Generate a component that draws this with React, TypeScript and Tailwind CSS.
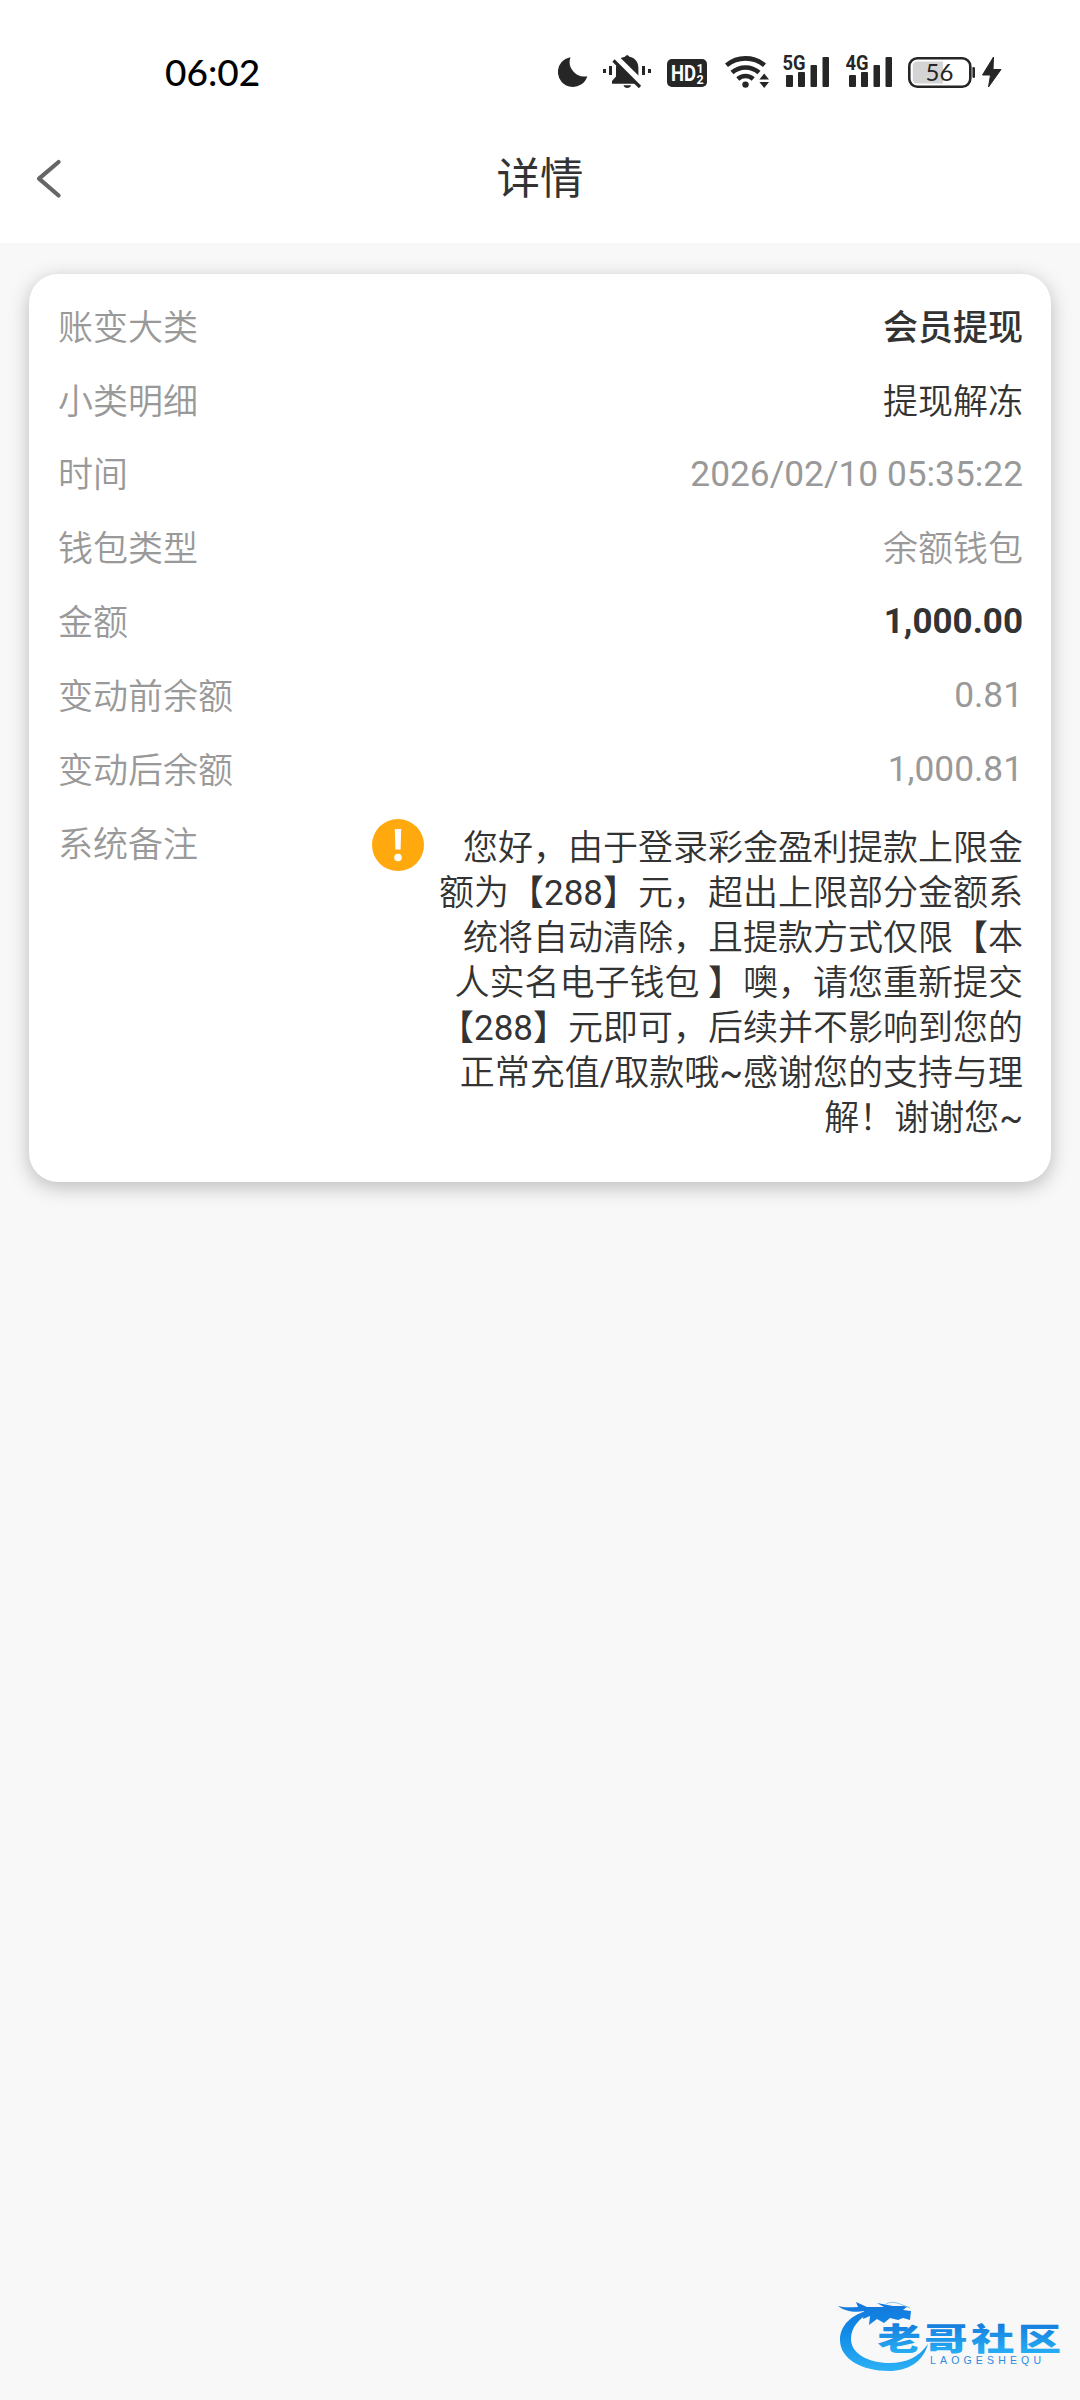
import type { ReactNode } from 'react';

type ValueTone = 'muted' | 'dark' | 'medium' | 'bold' | 'number';

interface DetailRowProps {
  label: string;
  value: string;
  tone?: ValueTone;
}

const toneClasses: Record<ValueTone, string> = {
  muted: 'pt-[3px] text-[#999] font-[350]',
  number: 'text-[35.3px] text-[#999] font-normal',
  dark: 'pt-[3px] text-[#333] font-[350]',
  medium: 'pt-[3px] text-[#333] font-medium',
  bold: '-mt-px text-[#333] font-bold',
};

const rows: DetailRowProps[] = [
  { label: '账变大类', value: '会员提现', tone: 'medium' },
  { label: '小类明细', value: '提现解冻', tone: 'dark' },
  { label: '时间', value: '2026/02/10 05:35:22', tone: 'number' },
  { label: '钱包类型', value: '余额钱包' },
  { label: '金额', value: '1,000.00', tone: 'bold' },
  { label: '变动前余额', value: '0.81', tone: 'number' },
  { label: '变动后余额', value: '1,000.81', tone: 'number' },
];

const remarkLines = [
  '您好，由于登录彩金盈利提款上限金',
  '额为【288】元，超出上限部分金额系',
  '统将自动清除，且提款方式仅限【本',
  '人实名电子钱包 】噢，请您重新提交',
  '【288】元即可，后续并不影响到您的',
  '正常充值/取款哦~感谢您的支持与理',
  '解！谢谢您~',
];

function SignalIcon({ label }: { label: string }) {
  return (
    <svg width="47" height="40" viewBox="0 0 47 40" fill="#262626">
      <text
        x="-0.5"
        y="19.5"
        fontFamily="Roboto, sans-serif"
        fontWeight="700"
        fontSize="20"
        textLength="23"
        lengthAdjust="spacingAndGlyphs"
      >
        {label}
      </text>
      <rect x="3" y="25" width="7" height="12" rx="1" />
      <rect x="15" y="22" width="7" height="15" rx="1" />
      <rect x="27.5" y="15" width="6.5" height="22" rx="1" />
      <rect x="39.5" y="7" width="6.5" height="30" rx="1" />
    </svg>
  );
}

function StatusBar() {
  return (
    <div className="flex h-[140px] items-start justify-between pt-[50px] pr-[78px] pl-[165px]">
      <span className="-mt-px font-[Lato,sans-serif] text-[37px] leading-[46px] font-medium text-black">06:02</span>
      <div className="flex">
        {/* Do not disturb */}
        <svg className="mr-[15px]" width="30" height="40" viewBox="558 50 30 40" fill="#262626">
          <path d="M570.5 57.2A15 15 0 1 0 587.3 76.2A14.6 14.6 0 0 1 570.5 57.2Z" />
        </svg>
        {/* Vibrate, ringer off */}
        <svg className="mr-[16px]" width="48" height="40" viewBox="603 50 48 40" fill="#262626">
          <rect x="603" y="69" width="3" height="4" />
          <rect x="609" y="66" width="3" height="9" />
          <rect x="642" y="66" width="3" height="9" />
          <rect x="648" y="69" width="3" height="4" />
          <path d="M612 83.8V81L616 76.5V68C616 61 620 57.5 625 56.8C625.6 54.6 628.8 54.6 629.4 56.8C635 57.8 638.4 62 638.4 68V76L642 80.5V83.8Z" />
          <path d="M623.5 85.3H631C630.4 89 624.2 89 623.5 85.3Z" />
          <path d="M615.5 58.5L643 85.5" stroke="#fff" strokeWidth="8" />
          <path d="M613.5 60.5L640 87" stroke="#262626" strokeWidth="3.2" />
        </svg>
        {/* HD dual SIM */}
        <svg className="mr-[18px]" width="40" height="40" viewBox="667 50 40 40">
          <rect x="667" y="59" width="40" height="28" rx="5" fill="#262626" />
          <g fill="#fff" fontFamily="Roboto, sans-serif" fontWeight="700">
            <text x="671" y="81" fontSize="22" textLength="25" lengthAdjust="spacingAndGlyphs">HD</text>
            <text x="696.5" y="72.5" fontSize="12.5">1</text>
            <text x="696.5" y="83.5" fontSize="12.5">2</text>
          </g>
        </svg>
        <svg className="mr-[13px]" width="45" height="40" viewBox="725 50 45 40" fill="none">
          <path d="M726.5 65.3A29.5 29.5 0 0 1 764.5 65.3" stroke="#262626" strokeWidth="4.6" />
          <path d="M732 72.5A20.5 20.5 0 0 1 759 72.5" stroke="#262626" strokeWidth="4.6" />
          <path d="M737.8 79A11.5 11.5 0 0 1 753.2 79" stroke="#262626" strokeWidth="4.6" />
          <circle cx="745.5" cy="84.6" r="3.2" fill="#262626" />
          <path d="M764.2 73.6L769 79.4H759.4ZM764.2 88L769 82H759.4Z" fill="#262626" />
        </svg>
        <div className="mr-[16px]">
          <SignalIcon label="5G" />
        </div>
        <div className="mr-[15px]">
          <SignalIcon label="4G" />
        </div>
        <svg className="mr-[7px]" width="67" height="40" viewBox="908 50 67 40">
          <rect x="909.3" y="58.3" width="61" height="28.4" rx="8" fill="#fff" stroke="#262626" strokeWidth="2.6" />
          <path d="M943 61.5H917Q912.8 61.5 912.8 66V79Q912.8 83.5 917 83.5H943Z" fill="#d4d4d4" />
          <rect x="972.4" y="67" width="2.6" height="11" rx="1.2" fill="#262626" />
          <text x="939.5" y="81.3" textAnchor="middle" fontFamily="Lato, sans-serif" fontSize="24" fill="#262626">
            56
          </text>
        </svg>
        <svg width="20" height="40" viewBox="982 50 20 40" fill="#262626">
          <path d="M993.5 57L982.5 75H990.5L988.5 87L1001 69.5H993Z" stroke="#262626" strokeLinejoin="round" />
        </svg>
      </div>
    </div>
  );
}

function NavBar() {
  return (
    <div className="flex h-[103px] items-start justify-between px-9">
      <svg width="28" height="78" viewBox="36 140 28 78" fill="none">
        <path d="M58.6 162L39 178.7L58.6 195.5" stroke="#666" strokeWidth="4.2" strokeLinecap="round" strokeLinejoin="round" />
      </svg>
      <h1 className="pt-[2px] text-[43.5px] leading-[76px] font-normal text-[#333]">详情</h1>
      <span className="w-7" />
    </div>
  );
}

function Row({ label, children }: { label: string; children: ReactNode }) {
  return (
    <div className="flex h-[73.8px] items-center justify-between">
      <span className="pt-[3px] font-[350] text-[#999]">{label}</span>
      {children}
    </div>
  );
}

// Latin runs use the regular weight, the Chinese text around them is lighter
function RemarkLine({ text }: { text: string }) {
  return (
    <p className="whitespace-pre">
      {text.split(/([\d/~]+)/).map((part, i) =>
        i % 2 === 1 ? <span key={i} className="font-normal">{part}</span> : part
      )}
    </p>
  );
}

function WatermarkLogo() {
  return (
    <svg className="mt-auto self-end" width="260" height="120" viewBox="0 0 260 120">
      <defs>
        <linearGradient id="logoBlue" gradientUnits="userSpaceOnUse" x1="0" y1="22" x2="0" y2="90">
          <stop offset="0" stopColor="#1478dc" />
          <stop offset="0.45" stopColor="#0f8ae8" />
          <stop offset="1" stopColor="#2bb0f4" />
        </linearGradient>
        <linearGradient id="nameBlue" x1="0" y1="0" x2="0" y2="1">
          <stop offset="0.25" stopColor="#1680df" />
          <stop offset="0.9" stopColor="#27b0f5" />
        </linearGradient>
      </defs>
      {/* Dragon ring */}
      <path
        d="M50 30C32 34 20 45 20 60C20 79 42 91 69 91C88 91 103 82 108 64C99 77 86 83 70 83C47 83 31 73 31 59C31 48 38 39 50 33Z"
        fill="url(#logoBlue)"
      />
      {/* Dragon head */}
      <path
        d="M18 26C25 28 31 27 38 27L36 22L47 27L64 27L57 23L73 26L88 26L83 30L91 31L90 40L83 38L78 40L70 38L64 43L57 39L49 45L50 36L43 39L44 31C35 33 24 31 18 26Z"
        fill="url(#logoBlue)"
      />
      <path d="M66 24C73 20 80 24 90 28" stroke="#8cc6f2" strokeWidth="1" fill="none" />
      <text
        transform="translate(57.5 70) scale(1.4 1)"
        fontFamily="'Noto Sans CJK SC', sans-serif"
        fontWeight="900"
        fontSize="31"
        letterSpacing="2.4"
        fill="url(#nameBlue)"
      >
        老哥社区
      </text>
      <text
        x="110"
        y="84"
        fontFamily="'Liberation Sans', sans-serif"
        fontSize="10.5"
        textLength="111"
        fill="#2f8ade"
      >
        LAOGESHEQU
      </text>
    </svg>
  );
}

export default function App() {
  return (
    <div className="flex h-[2400px] w-[1080px] flex-col bg-[#f8f8f8] font-[Roboto,'Noto_Sans_CJK_SC',sans-serif] [text-spacing-trim:space-all]">
      <header className="bg-white">
        <StatusBar />
        <NavBar />
      </header>

      <main className="mx-[29px] mt-[31px] h-[908px] rounded-[29px] bg-white pt-4 pr-7 pl-[29px] text-[35px] leading-[45px] shadow-[0_5px_20px_rgba(0,0,0,0.25)]">
        {rows.map(({ label, value, tone = 'muted' }) => (
          <Row key={label} label={label}>
            <span className={toneClasses[tone]}>{value}</span>
          </Row>
        ))}

        {/* Remark */}
        <div className="flex items-start">
          <span className="pt-4 font-[350] text-[#999]">系统备注</span>
          <svg className="mt-[12px] ml-auto" width="52" height="52" viewBox="0 0 52 52">
            <circle cx="26" cy="26" r="26" fill="#ffa90e" />
            <path d="M22.8 10H29.2L28.6 30.5H23.4Z" fill="#fff" />
            <circle cx="26" cy="38.5" r="3.8" fill="#fff" />
          </svg>
          <div className="w-[599px] pt-[19px] text-right font-[350] text-[#333]">
            {remarkLines.map((line) => (
              <RemarkLine key={line} text={line} />
            ))}
          </div>
        </div>
      </main>

      <WatermarkLogo />
    </div>
  );
}
